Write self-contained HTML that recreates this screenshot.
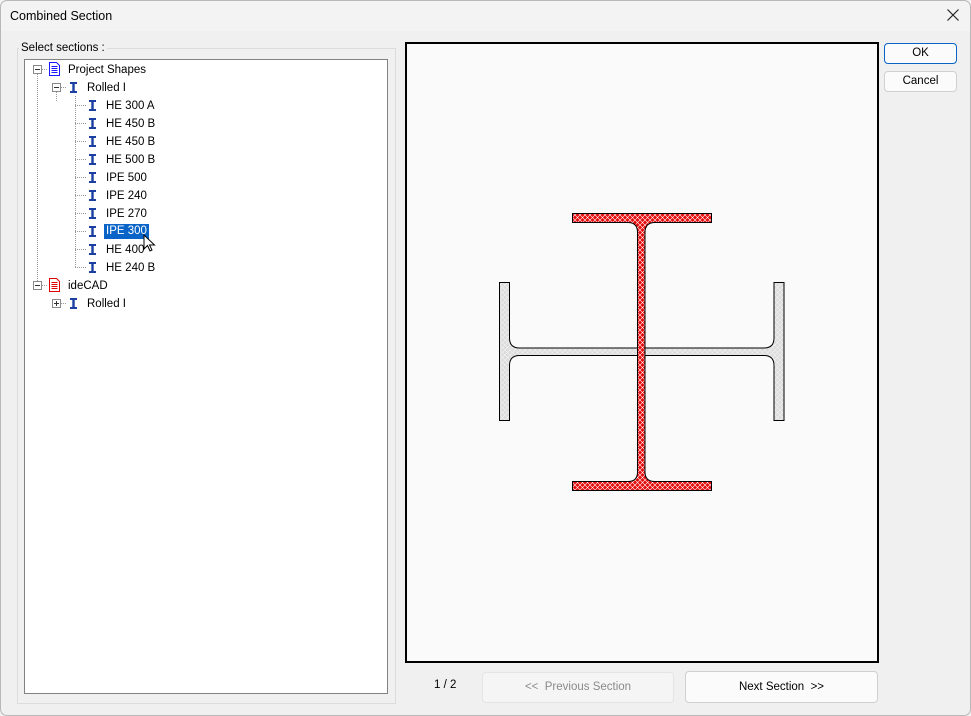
<!DOCTYPE html>
<html><head><style>
*{margin:0;padding:0;box-sizing:border-box}
body{width:971px;height:716px;background:#f0f0f0;font-family:"Liberation Sans",sans-serif;font-size:12px;color:#000;position:relative;overflow:hidden}
.abs{position:absolute}
.title{left:0;top:0;width:971px;height:31px;background:#f3f3f3;}
.title span{position:absolute;left:10px;top:9px;font-size:12.5px}
.win{left:0;top:0;width:971px;height:716px;border:1px solid #b8b8b8;border-radius:7px;}
.grp{left:17px;top:48px;width:379px;height:656px;border:1px solid #dcdcdc}
.grpl{left:19px;top:42px;background:#f0f0f0;padding:0 2px;font-size:11.5px}
.tree{left:24px;top:59px;width:364px;height:635px;background:#fff;border:1px solid #828282}
.row{position:absolute;font-size:11.5px;white-space:nowrap;margin-top:2px}
.btn{position:absolute;border:1px solid #d0d0d0;border-radius:4px;background:#fbfbfb;text-align:center;font-size:11.5px}
</style></head><body>
<div class="abs title"><span>Combined Section</span></div>
<svg class="abs" style="left:946px;top:8px" width="14" height="14"><path d="M1.5 1.5L12.5 12.5M12.5 1.5L1.5 12.5" stroke="#222" stroke-width="1.2"/></svg>
<div class="abs grp"></div>
<div class="abs grpl">Select sections :</div>
<div class="abs tree">
<svg width="364" height="635" style="position:absolute;left:0;top:0">
<defs>
<g id="ib"><path d="M0 0h7v2h-2.3v7h2.3v2h-7v-2h2.3v-7h-2.3z" fill="#1a3fa0"/></g>
<g id="doc"><path d="M0.5 0.5h7l3 3v10h-10z" fill="#fff" stroke="currentColor"/><path d="M2.5 4.5h6M2.5 6.5h6M2.5 8.5h6M2.5 10.5h6" stroke="currentColor"/></g>
</defs>
<g stroke="#999" stroke-dasharray="1,1" fill="none">
<path d="M12.5 14v211"/><path d="M31.5 32v9"/><path d="M50.5 36v171"/>
<path d="M17 9.5h6M36 27.5h6M17 225.5h6M36 243.5h6"/>
<path d="M50 45.5h12M50 63.5h12M50 81.5h12M50 99.5h12M50 117.5h12M50 135.5h12M50 153.5h12M50 171.5h12M50 189.5h12M50 207.5h12"/>
</g>
<g fill="#fff" stroke="#8a8a8a"><rect x="8.5" y="5.5" width="8" height="8"/><rect x="27.5" y="23.5" width="8" height="8"/><rect x="8.5" y="221.5" width="8" height="8"/><rect x="27.5" y="239.5" width="8" height="8"/></g>
<g stroke="#333"><path d="M10 9.5h5M29 27.5h5M10 225.5h5M29 243.5h5M31.5 241v5"/></g>
<use href="#doc" x="24" y="2" style="color:#1a1aff"/>
<use href="#doc" x="24" y="218" style="color:#e00000"/>
<use href="#ib" x="45" y="22"/><use href="#ib" x="45" y="238"/>
<use href="#ib" x="64" y="40"/><use href="#ib" x="64" y="58"/><use href="#ib" x="64" y="76"/><use href="#ib" x="64" y="94"/><use href="#ib" x="64" y="112"/><use href="#ib" x="64" y="130"/><use href="#ib" x="64" y="148"/><use href="#ib" x="64" y="166"/><use href="#ib" x="64" y="184"/><use href="#ib" x="64" y="202"/>
</svg>
<div class="row" style="left:43px;top:2px">Project Shapes</div>
<div class="row" style="left:62px;top:20px">Rolled I</div>
<div class="row" style="left:81px;top:38px">HE 300 A</div>
<div class="row" style="left:81px;top:56px">HE 450 B</div>
<div class="row" style="left:81px;top:74px">HE 450 B</div>
<div class="row" style="left:81px;top:92px">HE 500 B</div>
<div class="row" style="left:81px;top:110px">IPE 500</div>
<div class="row" style="left:81px;top:128px">IPE 240</div>
<div class="row" style="left:81px;top:146px">IPE 270</div>
<div class="row" style="left:79px;top:162px;background:#0a64c8;color:#fff;padding:1px 2px 2px">IPE 300</div>
<div class="row" style="left:81px;top:182px">HE 400</div>
<div class="row" style="left:81px;top:200px">HE 240 B</div>
<div class="row" style="left:43px;top:218px">ideCAD</div>
<div class="row" style="left:62px;top:236px">Rolled I</div>
<svg style="position:absolute;left:118px;top:174px" width="14" height="20"><path d="M1 1v14l3.5-3.5 2.5 5.5 2-1-2.5-5h5z" fill="#fff" stroke="#000" stroke-width="1"/></svg>
</div>
<div class="abs" style="left:405px;top:42px;width:474px;height:621px;border:2px solid #000;background:#fafafa"></div>
<svg class="abs" style="left:0;top:0" width="971" height="716">
<defs>
<pattern id="pr" width="5" height="5" patternUnits="userSpaceOnUse"><rect width="5" height="5" fill="#e40c0c"/><path d="M0 0L5 5M5 0L0 5" stroke="#fff" stroke-width="0.6"/></pattern>
<pattern id="pg" width="5" height="5" patternUnits="userSpaceOnUse"><rect width="5" height="5" fill="#dcdcdc"/><path d="M0 0L5 5M5 0L0 5" stroke="#f4f4f4" stroke-width="0.6"/></pattern>
</defs>
<path d="M499.5 282.5H509.5V338Q509.5 348 519.5 348H764Q774 348 774 338V282.5H784V420.5H774V365.5Q774 355.5 764 355.5H519.5Q509.5 355.5 509.5 365.5V420.5H499.5Z" fill="url(#pg)" stroke="#000" stroke-width="1"/>
<path d="M572.5 213.5H711.5V222.5H655Q645 222.5 645 232.5V472Q645 481.5 655 481.5H711.5V490.5H572.5V481.5H628Q637.5 481.5 637.5 472V232.5Q637.5 222.5 628 222.5H572.5Z" fill="url(#pr)" stroke="#000" stroke-width="1"/>
</svg>
<div class="abs" style="left:434px;top:679px;font-size:11.5px">1 / 2</div>
<div class="btn" style="left:482px;top:672px;width:192px;height:31px;line-height:29px;color:#8a8a8a;background:#f5f5f5;border-color:#e4e4e4">&lt;&lt;&nbsp; Previous Section</div>
<div class="btn" style="left:685px;top:671px;width:193px;height:32px;line-height:30px">Next Section&nbsp; &gt;&gt;</div>
<div class="btn" style="left:884px;top:43px;width:73px;height:21px;line-height:19px;border-color:#0a64c8">OK</div>
<div class="btn" style="left:884px;top:71px;width:73px;height:21px;line-height:19px">Cancel</div>
<div class="abs win"></div>
</body></html>
